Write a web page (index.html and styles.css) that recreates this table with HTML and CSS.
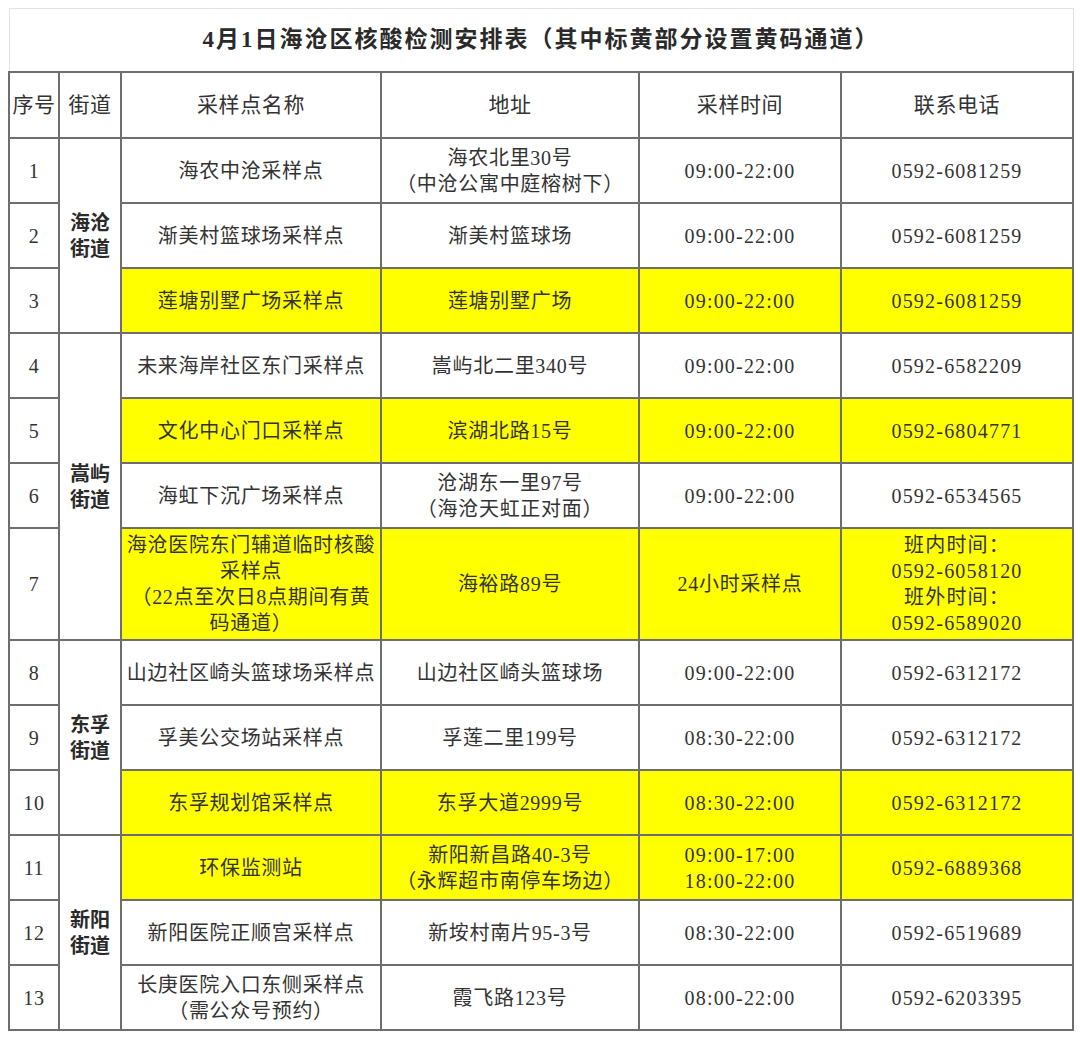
FILE: index.html
```html
<!DOCTYPE html>
<html lang="zh">
<head>
<meta charset="utf-8">
<link rel="stylesheet" href="styles.css">
</head>
<body>
<table class="sheet">
  <colgroup>
    <col class="c1"><col class="c2"><col class="c3"><col class="c4"><col class="c5"><col class="c6">
  </colgroup>
  <tr class="title-row"><td colspan="6" class="title">4月1日海沧区核酸检测安排表（其中标黄部分设置黄码通道）</td></tr>
  <tr class="head"><td>序号</td><td>街道</td><td>采样点名称</td><td>地址</td><td>采样时间</td><td>联系电话</td></tr>
  <tr><td>1</td><td rowspan="3" class="street">海沧<br>街道</td><td>海农中沧采样点</td><td>海农北里30号<br>（中沧公寓中庭榕树下）</td><td class="num">09:00-22:00</td><td class="num">0592-6081259</td></tr>
  <tr><td>2</td><td>渐美村篮球场采样点</td><td>渐美村篮球场</td><td class="num">09:00-22:00</td><td class="num">0592-6081259</td></tr>
  <tr><td>3</td><td class="y">莲塘别墅广场采样点</td><td class="y">莲塘别墅广场</td><td class="y num">09:00-22:00</td><td class="y num">0592-6081259</td></tr>
  <tr><td>4</td><td rowspan="4" class="street">嵩屿<br>街道</td><td>未来海岸社区东门采样点</td><td>嵩屿北二里340号</td><td class="num">09:00-22:00</td><td class="num">0592-6582209</td></tr>
  <tr><td>5</td><td class="y">文化中心门口采样点</td><td class="y">滨湖北路15号</td><td class="y num">09:00-22:00</td><td class="y num">0592-6804771</td></tr>
  <tr><td>6</td><td>海虹下沉广场采样点</td><td>沧湖东一里97号<br>（海沧天虹正对面）</td><td class="num">09:00-22:00</td><td class="num">0592-6534565</td></tr>
  <tr class="tall"><td>7</td><td class="y">海沧医院东门辅道临时核酸<br>采样点<br>（22点至次日8点期间有黄<br>码通道）</td><td class="y">海裕路89号</td><td class="y">24小时采样点</td><td class="y num">班内时间：<br>0592-6058120<br>班外时间：<br>0592-6589020</td></tr>
  <tr><td>8</td><td rowspan="3" class="street">东孚<br>街道</td><td>山边社区崎头篮球场采样点</td><td>山边社区崎头篮球场</td><td class="num">09:00-22:00</td><td class="num">0592-6312172</td></tr>
  <tr><td>9</td><td>孚美公交场站采样点</td><td>孚莲二里199号</td><td class="num">08:30-22:00</td><td class="num">0592-6312172</td></tr>
  <tr><td>10</td><td class="y">东孚规划馆采样点</td><td class="y">东孚大道2999号</td><td class="y num">08:30-22:00</td><td class="y num">0592-6312172</td></tr>
  <tr><td>11</td><td rowspan="3" class="street">新阳<br>街道</td><td class="y">环保监测站</td><td class="y">新阳新昌路40-3号<br>（永辉超市南停车场边）</td><td class="y num">09:00-17:00<br>18:00-22:00</td><td class="y num">0592-6889368</td></tr>
  <tr><td>12</td><td>新阳医院正顺宫采样点</td><td>新垵村南片95-3号</td><td class="num">08:30-22:00</td><td class="num">0592-6519689</td></tr>
  <tr><td>13</td><td>长庚医院入口东侧采样点<br>（需公众号预约）</td><td>霞飞路123号</td><td class="num">08:00-22:00</td><td class="num">0592-6203395</td></tr>
</table>
</body>
</html>
```
FILE: styles.css
```css
html, body {
  margin: 0;
  background: #ffffff;
}
body {
  padding: 8px;
  font-family: "Liberation Serif", "Noto Sans CJK SC", serif;
  color: #333333;
}
.sheet {
  border-collapse: collapse;
  table-layout: fixed;
  width: 1064px;
}
.c1 { width: 50px; }
.c2 { width: 62px; }
.c3 { width: 260px; }
.c4 { width: 258px; }
.c5 { width: 202px; }
.c6 { width: 232px; }
.sheet td {
  border: 2px solid #6e6e6e;
  text-align: center;
  vertical-align: middle;
  font-size: 20px;
  letter-spacing: 0.7px;
  line-height: 26px;
  padding: 0;
  height: 63px;
}
.sheet td.num {
  letter-spacing: 1.2px;
}
.title-row td {
  border-top: 1px solid #e2e2e2;
  border-left: 1px solid #e2e2e2;
  border-right: 1px solid #e2e2e2;
  height: 62px;
  font-size: 23px;
  font-weight: bold;
  color: #2a2a2a;
  letter-spacing: 2px;
}
.head td {
  height: 64px;
  font-size: 21px;
}
.sheet .head td {
  letter-spacing: 0.6px;
}
.tall td {
  height: 110px;
}
.street {
  font-weight: bold;
  line-height: 28px;
  color: #2a2a2a;
}
.sheet td.street {
  font-size: 20px;
  letter-spacing: 0;
}
.y {
  background: #ffff00;
}
```
